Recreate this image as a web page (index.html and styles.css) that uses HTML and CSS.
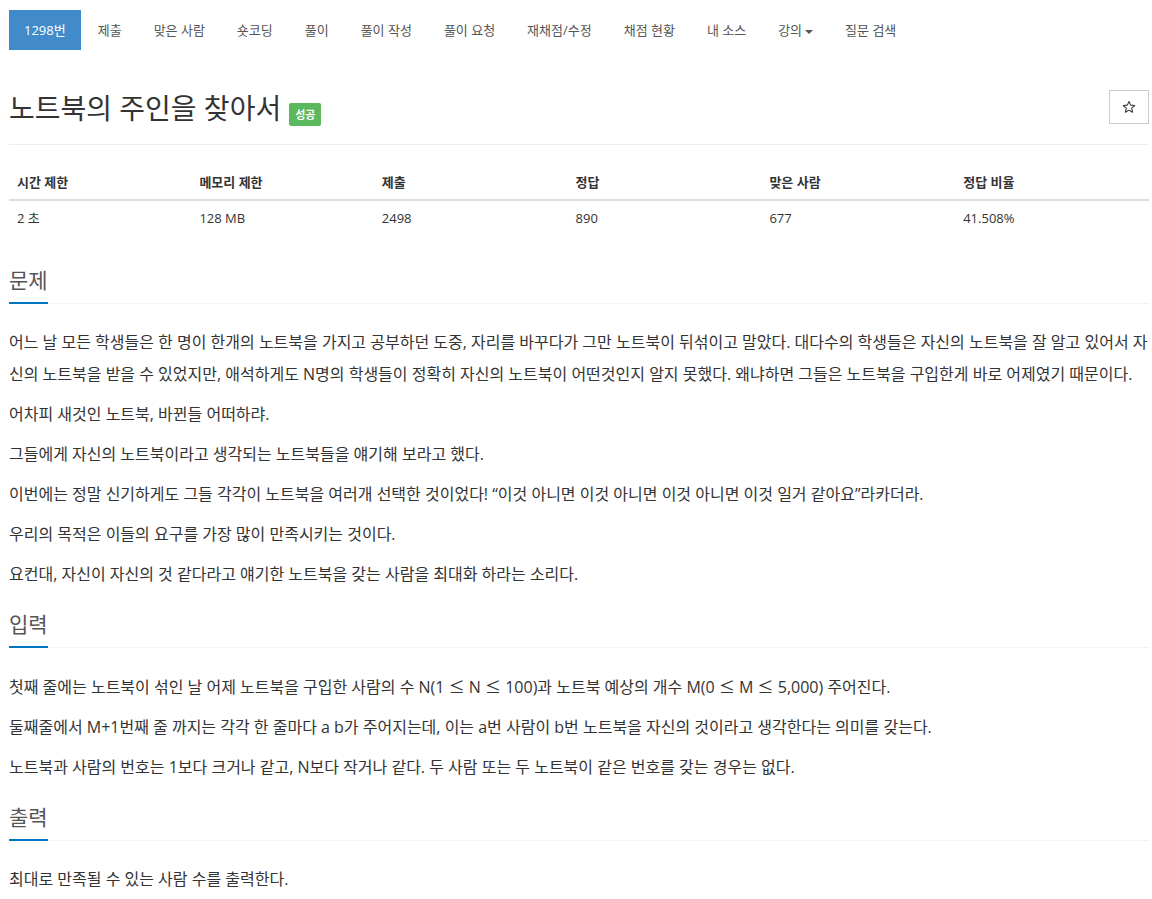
FILE: index.html
```html
<!DOCTYPE html>
<html lang="ko">
<head>
    <meta charset="UTF-8">
    <meta name="viewport" content="width=device-width, initial-scale=1.0">
    <title>노트북의 주인을 찾아서</title>
    <link rel="stylesheet" href="styles.css">
</head>
<body>

    <div class="container">
        <!-- Problem menu -->
        <ul class="problem-menu">
            <li class="active"><a href="#">1298번</a></li>
            <li><a href="#">제출</a></li>
            <li><a href="#">맞은 사람</a></li>
            <li><a href="#">숏코딩</a></li>
            <li><a href="#">풀이</a></li>
            <li><a href="#">풀이 작성</a></li>
            <li><a href="#">풀이 요청</a></li>
            <li><a href="#">재채점/수정</a></li>
            <li><a href="#">채점 현황</a></li>
            <li><a href="#">내 소스</a></li>
            <li><a href="#">강의<span class="caret"></span></a></li>
            <li><a href="#">질문 검색</a></li>
        </ul>

        <div class="page-header">
            <h1 class="problem-title">
                <span>노트북의 주인을 찾아서</span>
                <span class="label-success">성공</span>
            </h1>
            <button class="btn-star" title="즐겨찾기">
                <svg width="14" height="14" viewBox="0 0 24 24">
                    <polygon points="12,2.5 14.9,8.8 21.8,9.5 16.6,14.1 18.1,20.9 12,17.4 5.9,20.9 7.4,14.1 2.2,9.5 9.1,8.8" fill="none" stroke="#333" stroke-width="1.8" stroke-linejoin="round"/>
                </svg>
            </button>
        </div>

        <table class="problem-info">
            <thead>
                <tr>
                    <th>시간 제한</th>
                    <th>메모리 제한</th>
                    <th>제출</th>
                    <th>정답</th>
                    <th>맞은 사람</th>
                    <th>정답 비율</th>
                </tr>
            </thead>
            <tbody>
                <tr>
                    <td>2 초</td>
                    <td>128 MB</td>
                    <td>2498</td>
                    <td>890</td>
                    <td>677</td>
                    <td>41.508%</td>
                </tr>
            </tbody>
        </table>

        <section class="problem-section">
            <div class="headline"><h2>문제</h2></div>
            <p>어느 날 모든 학생들은 한 명이 한개의 노트북을 가지고 공부하던 도중, 자리를 바꾸다가 그만 노트북이 뒤섞이고 말았다. 대다수의 학생들은 자신의 노트북을 잘 알고 있어서 자신의 노트북을 받을 수 있었지만, 애석하게도 N명의 학생들이 정확히 자신의 노트북이 어떤것인지 알지 못했다. 왜냐하면 그들은 노트북을 구입한게 바로 어제였기 때문이다.</p>
            <p>어차피 새것인 노트북, 바뀐들 어떠하랴.</p>
            <p>그들에게 자신의 노트북이라고 생각되는 노트북들을 얘기해 보라고 했다.</p>
            <p>이번에는 정말 신기하게도 그들 각각이 노트북을 여러개 선택한 것이었다! “이것 아니면 이것 아니면 이것 아니면 이것 일거 같아요”라카더라.</p>
            <p>우리의 목적은 이들의 요구를 가장 많이 만족시키는 것이다.</p>
            <p>요컨대, 자신이 자신의 것 같다라고 얘기한 노트북을 갖는 사람을 최대화 하라는 소리다.</p>
        </section>

        <section class="problem-section">
            <div class="headline"><h2>입력</h2></div>
            <p>첫째 줄에는 노트북이 섞인 날 어제 노트북을 구입한 사람의 수 N(1 <span class="math">≤</span> N <span class="math">≤</span> 100)과 노트북 예상의 개수 M(0 <span class="math">≤</span> M <span class="math">≤</span> 5,000) 주어진다.</p>
            <p>둘째줄에서 M+1번째 줄 까지는 각각 한 줄마다 a b가 주어지는데, 이는 a번 사람이 b번 노트북을 자신의 것이라고 생각한다는 의미를 갖는다.</p>
            <p>노트북과 사람의 번호는 1보다 크거나 같고, N보다 작거나 같다. 두 사람 또는 두 노트북이 같은 번호를 갖는 경우는 없다.</p>
        </section>

        <section class="problem-section">
            <div class="headline"><h2>출력</h2></div>
            <p>최대로 만족될 수 있는 사람 수를 출력한다.</p>
        </section>
    </div>

</body>
</html>
```

FILE: styles.css
```css
body {
    font-family: "Open Sans", "Noto Sans CJK KR", sans-serif;
    color: #333;
    background-color: #fff;
    margin: 0;
}
.container {
    width: 1140px;
    margin: 0 0 0 9px;
}
.problem-menu {
    list-style: none;
    margin: 0;
    padding: 10px 0 0;
    display: flex;
}
.problem-menu li + li {
    margin-left: 2px;
}
.problem-menu a {
    display: block;
    padding: 10px 15px;
    line-height: 20px;
    font-size: 13px;
    color: #555;
    text-decoration: none;
}
.problem-menu li.active a {
    background-color: #428bca;
    color: #fff;
}
.caret {
    display: inline-block;
    width: 0;
    height: 0;
    margin-left: 3px;
    vertical-align: middle;
    border-top: 4px solid #555;
    border-left: 4px solid transparent;
    border-right: 4px solid transparent;
}
.page-header {
    display: flex;
    justify-content: space-between;
    align-items: flex-start;
    margin: 40px 0 20px;
    padding-bottom: 18px;
    border-bottom: 1px solid #eee;
}
.problem-title {
    display: flex;
    align-items: baseline;
    gap: 8px;
    margin: 0;
    font-size: 28px;
    font-weight: normal;
    line-height: 36px;
    color: #333;
}
.label-success {
    display: inline-block;
    padding: 4px 6px;
    font-size: 11px;
    line-height: 15px;
    font-weight: bold;
    color: #fff;
    background-color: #5cb85c;
    border-radius: 2px;
}
.btn-star {
    width: 40px;
    height: 34px;
    padding: 0;
    display: flex;
    align-items: center;
    justify-content: center;
    background-color: #fff;
    border: 1px solid #ccc;
    cursor: pointer;
}
.problem-info {
    width: 100%;
    border-collapse: collapse;
    margin-bottom: 31px;
    font-size: 13px;
}
.problem-info th,
.problem-info td {
    padding: 8px;
    line-height: 18px;
    text-align: left;
}
.problem-info th {
    width: 17%;
    font-weight: bold;
    border-bottom: 2px solid #ddd;
}
.problem-info th:nth-child(-n+2) {
    width: 16%;
}
.problem-section {
    margin-bottom: 20px;
}
.headline {
    display: flex;
    margin-bottom: 22px;
    border-bottom: 1px dotted #e4e9f0;
}
.headline h2 {
    margin: 0 0 -1px;
    padding-bottom: 8px;
    font-size: 21px;
    font-weight: normal;
    line-height: 28px;
    color: #555;
    border-bottom: 2px solid #0076c0;
}
.problem-section p {
    margin: 0 0 8px;
    font-size: 16px;
    line-height: 32px;
}
.math {
    font-family: "Noto Sans CJK KR", sans-serif;
}
```
